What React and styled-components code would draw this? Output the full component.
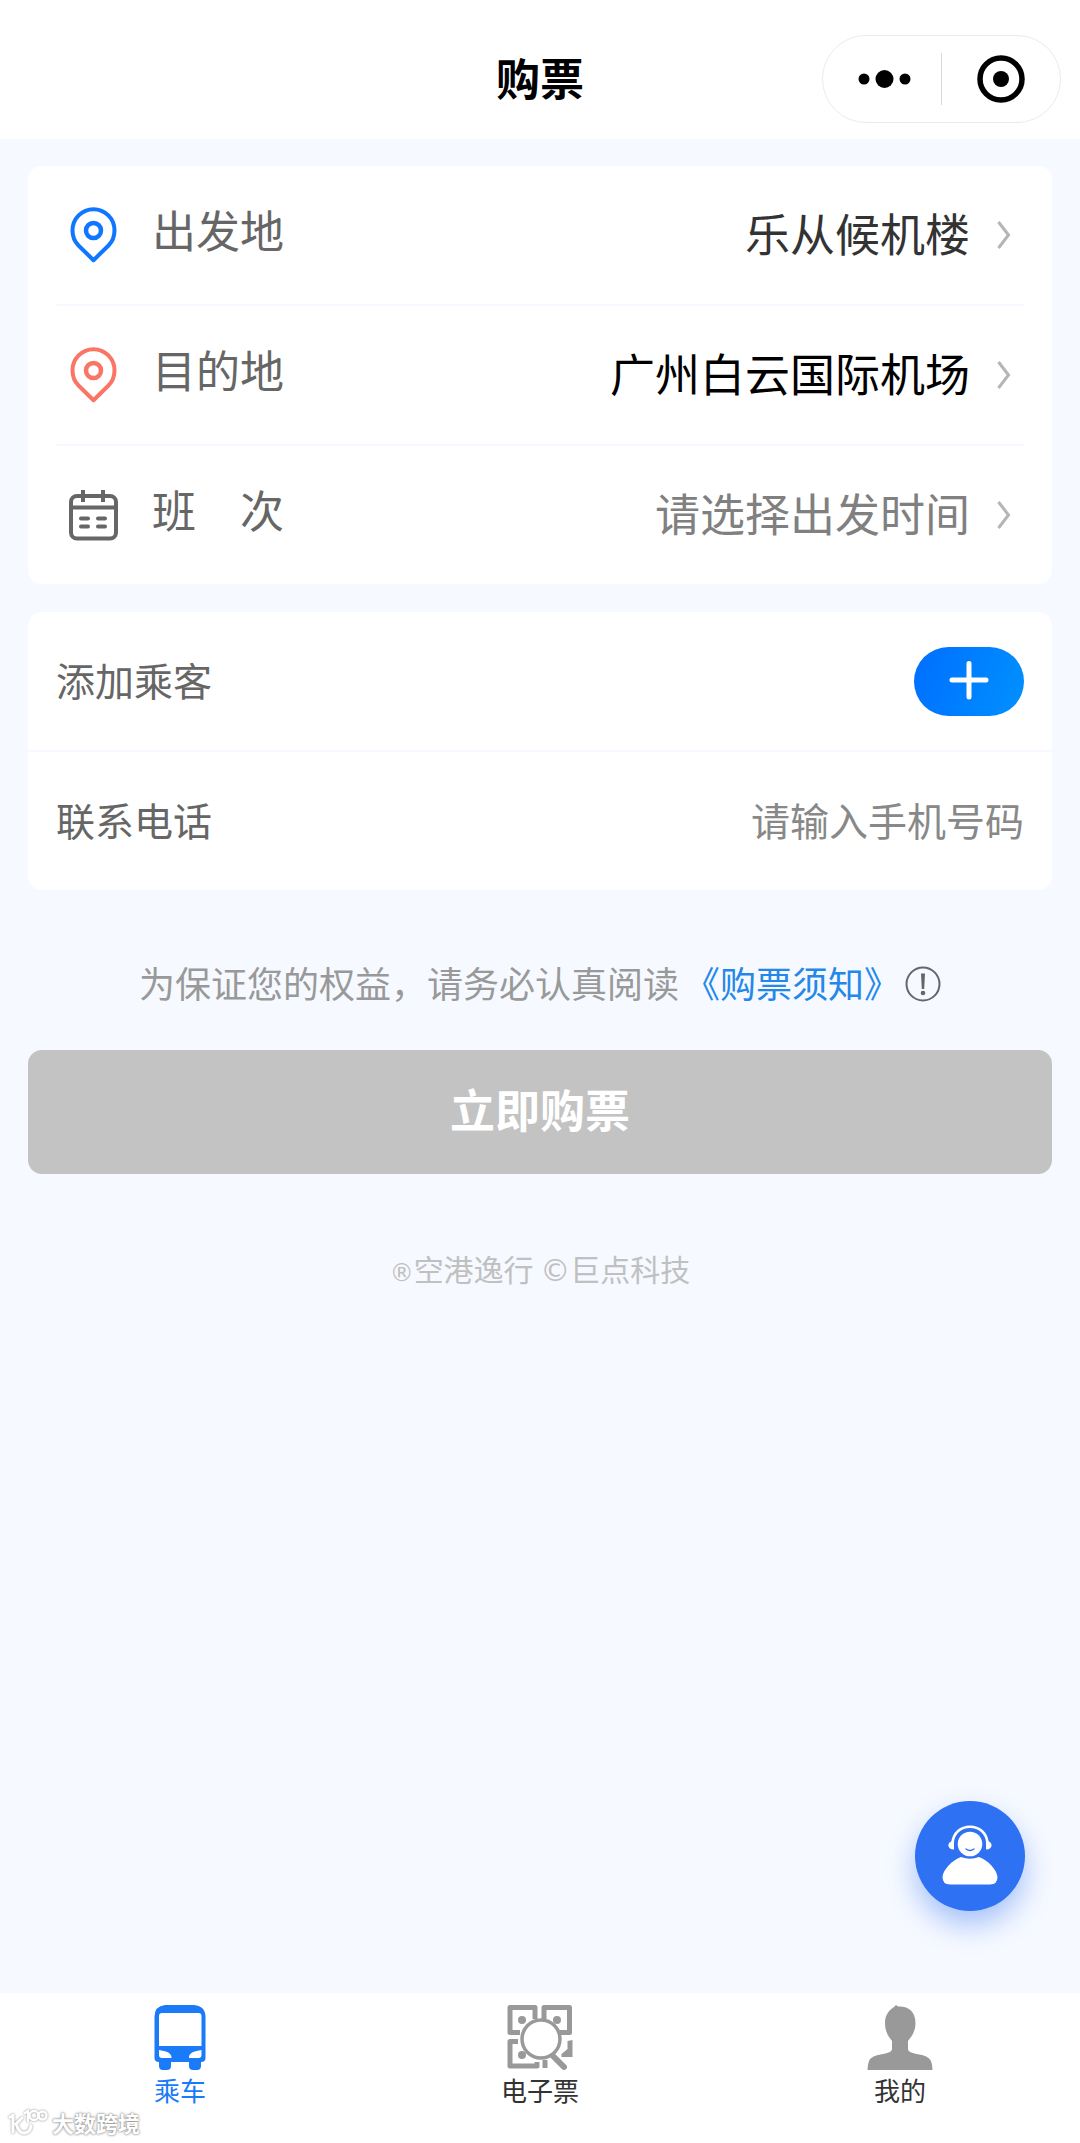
import React, { useState } from "react";
import styled, { createGlobalStyle } from "styled-components";

const GlobalStyle = createGlobalStyle`
  * {
    box-sizing: border-box;
  }
  body {
    margin: 0;
    background: #f6f9ff;
    font-family: "Noto Sans CJK SC", sans-serif;
  }
  button,
  input {
    font-family: inherit;
  }
`;

const Page = styled.div`
  display: flex;
  flex-direction: column;
  min-height: 100vh;
  background: #f6f9ff;
`;

const Header = styled.header`
  display: grid;
  grid-template-columns: 1fr auto 1fr;
  align-items: center;
  padding: 35px 19px 16px;
  background: #fff;
`;

const Title = styled.h1`
  grid-column: 2;
  margin: 0;
  padding-bottom: 4px;
  font-size: 44px;
  line-height: 64px;
  font-weight: 700;
  color: #000;
`;

const Capsule = styled.div`
  justify-self: end;
  display: flex;
  align-items: center;
  width: 239px;
  height: 88px;
  border: 1px solid #ebebeb;
  border-radius: 44px;
`;

const CapsuleButton = styled.button`
  flex: 1;
  display: flex;
  align-items: center;
  justify-content: center;
  height: 100%;
  padding: 0;
  border: none;
  background: none;
  cursor: pointer;
`;

const CapsuleDivider = styled.span`
  width: 1px;
  height: 52px;
  background: #d9d9d9;
`;

const Main = styled.main`
  flex: 1;
  display: flex;
  flex-direction: column;
  padding: 27px 28px 0;
`;

const Card = styled.section`
  margin-bottom: 28px;
  padding: 0 ${(props) => (props.$inset ? "28px" : "0")};
  border-radius: 14px;
  background: #fff;
`;

const TripRow = styled.button`
  display: flex;
  align-items: center;
  width: 100%;
  height: 140px;
  padding: 0 13px;
  border: none;
  border-bottom: 2px solid #f6f9ff;
  background: none;
  text-align: left;
  cursor: pointer;

  &:last-child {
    height: 138px;
    border-bottom: none;
  }
`;

const TripLabel = styled.span`
  flex: 1;
  margin-left: 34px;
  padding-bottom: 12px;
  font-size: 44px;
  line-height: 64px;
  color: #666;
`;

const TripValue = styled.span`
  margin-right: 26px;
  padding-bottom: 4px;
  font-size: 45px;
  line-height: 64px;
  color: ${(props) => props.$color};
`;

const FormRow = styled.div`
  display: flex;
  align-items: center;
  justify-content: space-between;
  height: ${(props) => (props.$last ? "138px" : "140px")};
  padding: 0 28px;
  border-bottom: ${(props) => (props.$last ? "none" : "2px solid #f6f9ff")};
`;

const FormLabel = styled.label`
  padding-bottom: 4px;
  font-size: 39px;
  line-height: 56px;
  color: #666;
`;

const AddButton = styled.button`
  display: flex;
  align-items: center;
  justify-content: center;
  width: 110px;
  height: 69px;
  padding: 0;
  border: none;
  border-radius: 35px;
  background: linear-gradient(110deg, #006eff, #0091ff);
  cursor: pointer;
`;

const PhoneInput = styled.input`
  flex: 1;
  min-width: 0;
  padding: 0 0 4px;
  border: none;
  outline: none;
  background: none;
  font-size: 39px;
  line-height: 56px;
  text-align: right;
  color: #333;

  &::placeholder {
    color: #888;
    opacity: 1;
  }
`;

const Notice = styled.div`
  display: flex;
  align-items: center;
  justify-content: center;
  gap: 5px;
  margin: 36px 0;
`;

const NoticeText = styled.span`
  padding-bottom: 4px;
  font-size: 36px;
  line-height: 56px;
  white-space: nowrap;
  color: #999;
`;

const NoticeLink = styled.a`
  padding-bottom: 4px;
  font-size: 36px;
  line-height: 56px;
  white-space: nowrap;
  color: #2388e8;
  text-decoration: none;
`;

const SubmitButton = styled.button`
  width: 100%;
  height: 124px;
  padding: 0 0 6px;
  border: none;
  border-radius: 14px;
  background: #c3c3c3;
  font-size: 45px;
  line-height: 64px;
  font-weight: 700;
  color: #fff;
`;

const Copyright = styled.footer`
  margin-top: 72px;
  font-size: 30px;
  line-height: 44px;
  text-align: center;
  color: #c0c0c0;
`;

const Mark = styled.span`
  font-family: "DejaVu Sans", sans-serif;
  font-size: ${(props) => (props.$small ? "24px" : "30px")};
`;

const TabBar = styled.nav`
  position: relative;
  display: flex;
  height: 150px;
  background: #fff;
`;

const Tab = styled.a`
  flex: 1;
  display: flex;
  flex-direction: column;
  align-items: center;
  padding-top: 12px;
  font-size: 26px;
  line-height: 38px;
  text-decoration: none;
  color: ${(props) => (props.$active ? "#1a7af8" : "#333")};
`;

const ServiceButton = styled.button`
  position: fixed;
  right: 55px;
  bottom: 232px;
  width: 110px;
  height: 110px;
  padding: 0;
  border: none;
  border-radius: 50%;
  background: #2f71f3;
  box-shadow: 0 14px 28px rgba(47, 113, 243, 0.4);
  cursor: pointer;
`;

const Watermark = styled.div`
  position: absolute;
  left: 8px;
  bottom: 7px;
  display: flex;
  align-items: center;
  gap: 4px;
  font-size: 22px;
  line-height: 28px;
  font-weight: 700;
  color: #fff;
  text-shadow: 0 0 2px #888, 0 0 3px #999;

  svg {
    filter: drop-shadow(0 0 1px #888);
  }
`;

const PinIcon = ({ color }) => (
  <svg width="49" height="56" viewBox="0 0 49 56" fill="none" stroke={color} strokeWidth="4">
    <path d="M24.5 53.2 L9.5 38.5 C5 34 3.5 29 3.5 23.5 A21 21.3 0 0 1 45.5 23.5 C45.5 29 44 34 39.5 38.5 Z" strokeLinejoin="round" />
    <circle cx="24.5" cy="23.5" r="7.5" strokeWidth="4.5" />
  </svg>
);

const CalendarIcon = () => (
  <svg width="49" height="52" viewBox="0 0 49 52" fill="none" stroke="#666" strokeWidth="4">
    <rect x="2" y="7" width="45" height="42.500" rx="6" />
    <path d="M2 18.500 H47 M14 1 V13 M34 1 V13" />
    <path d="M12 29.500 H19 M29 29.500 H36 M12 37.500 H19 M29 37.500 H36" strokeLinecap="round" />
  </svg>
);

const ChevronIcon = () => (
  <svg width="15" height="30" viewBox="0 0 15 30" fill="none" stroke="#b5b5b5" strokeWidth="3">
    <path d="M2.500 2 L12.500 15 L2.500 28" />
  </svg>
);

const DotsIcon = () => (
  <svg width="58" height="20" viewBox="0 0 58 20">
    <circle cx="11" cy="10" r="5.500" />
    <circle cx="31.500" cy="10" r="9" />
    <circle cx="52" cy="10" r="5.500" />
  </svg>
);

const TargetIcon = () => (
  <svg width="48" height="48" viewBox="0 0 48 48">
    <circle cx="24" cy="24" r="21" fill="none" stroke="#000" strokeWidth="5.500" />
    <circle cx="24" cy="24" r="8" />
  </svg>
);

const PlusIcon = () => (
  <svg width="40" height="40" viewBox="0 0 40 40" stroke="#fff" strokeWidth="5" strokeLinecap="round">
    <path d="M3 19 H37 M20 2.500 V36" />
  </svg>
);

const InfoIcon = () => (
  <svg width="36" height="36" viewBox="0 0 36 36" fill="none">
    <circle cx="18" cy="18" r="16.500" stroke="#666" strokeWidth="2" />
    <path d="M16 7.500 H20 L19.200 23 H16.800 Z" fill="#666" />
    <circle cx="18" cy="27" r="2.300" fill="#666" />
  </svg>
);

const ServiceIcon = () => (
  <svg width="110" height="110" viewBox="0 0 110 110">
    <path d="M37.500 43 C38 20 72 20 72.500 43" fill="none" stroke="#fff" strokeWidth="2.600" />
    <path d="M39 40 V48.500 C31.500 48.500 31.500 40 39 40 Z M71 40 V48.500 C78.500 48.500 78.500 40 71 40 Z" fill="#fff" />
    <circle cx="55" cy="43" r="12.300" fill="#fff" />
    <path d="M51 48 Q55 51 59 48" fill="none" stroke="#2f71f3" strokeWidth="1.300" strokeLinecap="round" />
    <path d="M46 56 Q55 59.500 64 56 C73 59 82 69 82.500 76 Q82.500 83.500 75 83.500 H35 Q27.500 83.500 27.500 76 C28 69 37 59 46 56 Z" fill="#fff" />
  </svg>
);

const BusIcon = () => (
  <svg width="66" height="66" viewBox="0 0 66 66">
    <path
      fill="#1a7af8"
      fillRule="evenodd"
      d="M18 0 H47 Q58.500 1 58.500 12 V53 Q58.500 57 54 57 V61 Q54 65 50 65 H46 Q42 65 42 61 V57 H24 V61 Q24 65 20 65 H16 Q12 65 12 61 V57 Q7.500 57 7.500 53 V12 Q7.500 1 18 0 Z M15 8 Q12 8 12 11 V41 H54.500 V11 Q54.500 8 51.500 8 Z M12 45 V50 Q12 53 15 53 H24.500 C25 48 19 46 12 45 Z M54.500 45 V50 Q54.500 53 51.500 53 H42 C41.500 48 47.500 46 54.500 45 Z"
    />
  </svg>
);

const TicketIcon = () => (
  <svg width="66" height="66" viewBox="0 0 66 66" fill="none" stroke="#999" strokeWidth="5">
    <path d="M13 27.500 H3 V2.500 H28 V14 M37 14 V2.500 H62.500 V27.500 H53 M11 36.500 H3 V61 H30 V57 M38 55 V63" strokeLinejoin="round" />
    <path d="M60.500 36 L65.500 35 V52 H54.500 V49 L60.500 44 Z" fill="#999" stroke="none" />
    <circle cx="15" cy="15" r="4" fill="#999" stroke="none" />
    <circle cx="50" cy="15" r="4" fill="#999" stroke="none" />
    <circle cx="15" cy="50" r="4" fill="#999" stroke="none" />
    <circle cx="34" cy="34" r="19" fill="#fff" strokeWidth="3.500" />
    <path d="M46 51 L57 62" strokeWidth="6" strokeLinecap="round" />
  </svg>
);

const UserIcon = () => (
  <svg width="66" height="66" viewBox="0 0 66 66">
    <path
      fill="#999"
      d="M29 0 L31 1.500 C42 1 48.500 7 48.500 18 C48.500 26 45 31 41 36 V44 C42 51 60 47 64 56 Q65.500 60 65.500 65 H0.500 Q0.500 60 2 56 C6 47 24 51 25 44 V36 C21 31 18 26 18 18 C18 10 22 5 27 2 Z"
    />
  </svg>
);

const WatermarkLogo = () => (
  <svg width="40" height="28" viewBox="0 0 40 28" fill="none" stroke="#fff" strokeWidth="3" strokeLinecap="round">
    <path d="M2 9 Q5 9 5 6 V24 M14 10 L8 16 Q11 25 16 25 Q22 25 23 18" />
    <path d="M17 5 L20 3 V13" strokeWidth="2.500" />
    <circle cx="26" cy="7.500" r="4.500" strokeWidth="2.500" />
    <circle cx="34.500" cy="7.500" r="4" strokeWidth="2.500" />
  </svg>
);

const trips = [
  { label: "出发地", value: "乐从候机楼", color: "#333", icon: <PinIcon color="#0f76ff" /> },
  { label: "目的地", value: "广州白云国际机场", color: "#000", icon: <PinIcon color="#fa7566" /> },
  { label: "班　次", value: "请选择出发时间", color: "#808080", icon: <CalendarIcon /> },
];

const tabs = [
  { label: "乘车", icon: <BusIcon /> },
  { label: "电子票", icon: <TicketIcon /> },
  { label: "我的", icon: <UserIcon /> },
];

const App = () => {
  const [phone, setPhone] = useState("");

  return (
    <Page>
      <GlobalStyle />
      <Header>
        <Title>购票</Title>
        <Capsule>
          <CapsuleButton type="button" aria-label="更多">
            <DotsIcon />
          </CapsuleButton>
          <CapsuleDivider />
          <CapsuleButton type="button" aria-label="关闭">
            <TargetIcon />
          </CapsuleButton>
        </Capsule>
      </Header>

      <Main>
        <Card $inset>
          {trips.map((trip) => (
            <TripRow type="button" key={trip.label}>
              {trip.icon}
              <TripLabel>{trip.label}</TripLabel>
              <TripValue $color={trip.color}>{trip.value}</TripValue>
              <ChevronIcon />
            </TripRow>
          ))}
        </Card>

        <Card>
          <FormRow>
            <FormLabel htmlFor="add">添加乘客</FormLabel>
            <AddButton id="add" type="button">
              <PlusIcon />
            </AddButton>
          </FormRow>
          <FormRow $last>
            <FormLabel htmlFor="phone">联系电话</FormLabel>
            <PhoneInput
              id="phone"
              type="tel"
              placeholder="请输入手机号码"
              value={phone}
              onChange={(e) => setPhone(e.target.value)}
            />
          </FormRow>
        </Card>

        <Notice>
          <NoticeText>为保证您的权益，请务必认真阅读</NoticeText>
          <NoticeLink href="#notice">《购票须知》</NoticeLink>
          <InfoIcon />
        </Notice>
        <SubmitButton type="button" disabled>
          立即购票
        </SubmitButton>
        <Copyright>
          <Mark $small>®</Mark>空港逸行 <Mark>©</Mark>巨点科技
        </Copyright>
      </Main>

      <ServiceButton type="button" aria-label="客服">
        <ServiceIcon />
      </ServiceButton>

      <TabBar>
        {tabs.map((tab, index) => (
          <Tab href="#" key={tab.label} $active={index === 0}>
            {tab.icon}
            {tab.label}
          </Tab>
        ))}
        <Watermark>
          <WatermarkLogo />
          大数跨境
        </Watermark>
      </TabBar>
    </Page>
  );
};

export default App;
